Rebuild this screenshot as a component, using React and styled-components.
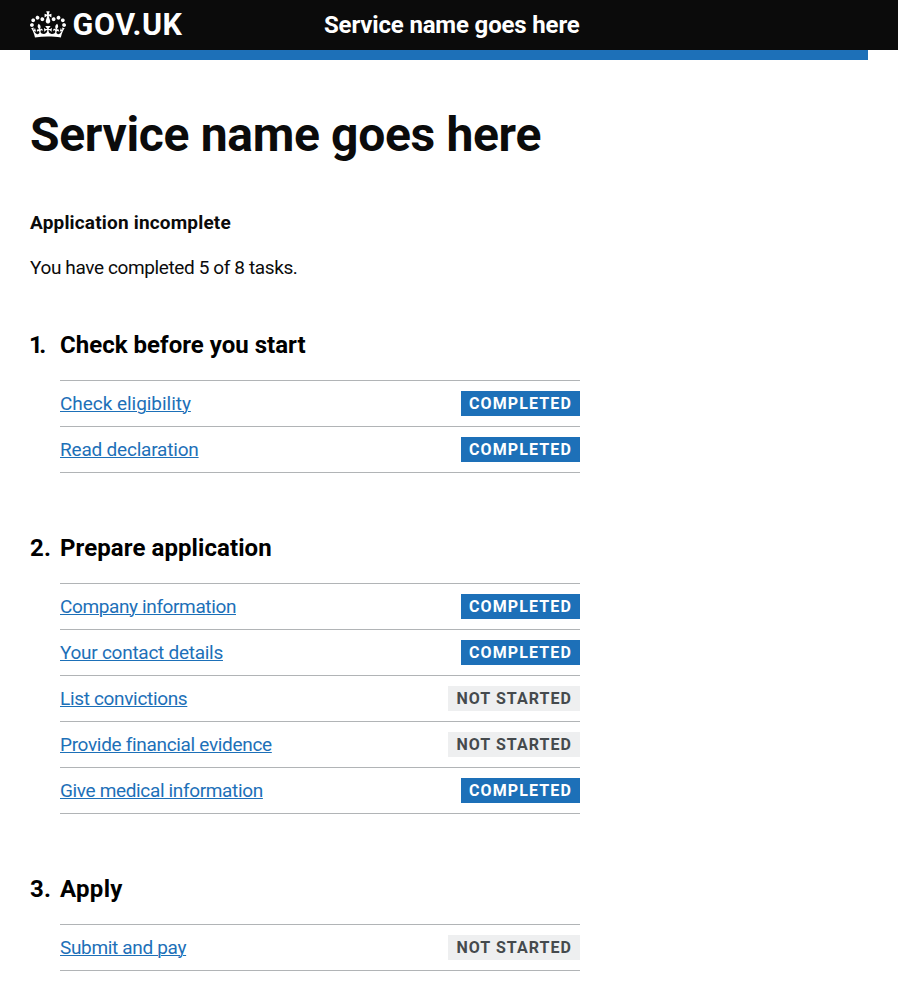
import React from 'react';
import styled, { createGlobalStyle } from 'styled-components';

const GlobalStyle = createGlobalStyle`
  *, *::before, *::after { box-sizing: border-box; }
  body {
    margin: 0;
    background: #fff;
    color: #0b0b0b;
    font-family: Roboto, "Liberation Sans", sans-serif;
    -webkit-font-smoothing: antialiased;
  }
`;

const Header = styled.header`
  height: 60px;
  padding: 0 30px;
  background: linear-gradient(#0b0b0b 50px, #fff 50px);
`;

const HeaderContainer = styled.div`
  display: grid;
  grid-template-columns: 294px 1fr;
  height: 60px;
  padding-top: 10px;
  border-bottom: 10px solid #1d70b8;
`;

const LogoLink = styled.a`
  display: flex;
  align-items: flex-start;
  gap: 6.5px;
  color: #fff;
  text-decoration: none;
`;

const Crown = styled.svg`
  flex: none;
  width: 36px;
  height: 27px;
  margin-top: 0.5px;
  fill: currentColor;
`;

const LogoText = styled.span`
  font-size: 30.5px;
  line-height: 30px;
  font-weight: 700;
  letter-spacing: 0.6px;
`;

const ServiceLink = styled.a`
  color: #fff;
  font-size: 24px;
  line-height: 30px;
  font-weight: 700;
  letter-spacing: -0.16px;
  text-decoration: none;
`;

const Main = styled.main`
  width: 610px;
  padding: 50px 30px 0;
`;

const PageTitle = styled.h1`
  margin: 0 0 50px;
  font-size: 48px;
  line-height: 50px;
  font-weight: 700;
  letter-spacing: -0.33px;
`;

const StatusTitle = styled.h2`
  margin: 0 0 20px;
  font-size: 19px;
  line-height: 25px;
  font-weight: 700;
  letter-spacing: 0.18px;
`;

const Summary = styled.p`
  margin: 0 0 50px;
  font-size: 19px;
  line-height: 25px;
  letter-spacing: -0.38px;
`;

const Sections = styled.ol`
  display: flex;
  flex-direction: column;
  gap: 60px;
  margin: 0;
  padding: 0;
  list-style: none;
`;

const SectionTitle = styled.h2`
  display: grid;
  grid-template-columns: 30px 1fr;
  margin: 0 0 20px;
  color: #000;
  font-size: 24px;
  line-height: 30px;
  font-weight: 700;
  letter-spacing: ${({ $tracking }) => $tracking}px;
`;

const SectionNumber = styled.span`
  margin-left: ${({ $narrow }) => ($narrow ? -1 : 0)}px;
  letter-spacing: ${({ $narrow }) => ($narrow ? -3.5 : 0.3)}px;
`;

const TaskList = styled.ul`
  margin: 0 0 0 30px;
  padding: 0;
  border-top: 1px solid #b1b4b6;
  list-style: none;
`;

const Task = styled.li`
  display: flex;
  justify-content: space-between;
  padding: 10px 0;
  border-bottom: 1px solid #b1b4b6;
`;

const TaskLink = styled.a`
  color: #1d70b8;
  font-size: 19px;
  line-height: 25px;
  letter-spacing: ${({ $tracking }) => $tracking}px;
  text-decoration: underline;
  text-decoration-thickness: 1px;
  text-underline-offset: 1px;
`;

const Tag = styled.strong`
  height: 25px;
  padding: 0 8px;
  background: ${({ $done }) => ($done ? '#1d70b8' : '#eeeff0')};
  color: ${({ $done }) => ($done ? '#fff' : '#454a4d')};
  font-size: 16px;
  line-height: 25px;
  font-weight: 700;
  letter-spacing: ${({ $done }) => ($done ? 1.12 : 1.045)}px;
  text-transform: uppercase;
  white-space: nowrap;
`;

const sections = [
  {
    title: 'Check before you start',
    tracking: 0.02,
    tasks: [
      { name: 'Check eligibility', done: true, tracking: -0.04 },
      { name: 'Read declaration', done: true, tracking: -0.2 },
    ],
  },
  {
    title: 'Prepare application',
    tracking: 0.08,
    tasks: [
      { name: 'Company information', done: true, tracking: -0.38 },
      { name: 'Your contact details', done: true, tracking: -0.27 },
      { name: 'List convictions', done: false, tracking: -0.33 },
      { name: 'Provide financial evidence', done: false, tracking: -0.32 },
      { name: 'Give medical information', done: true, tracking: -0.35 },
    ],
  },
  {
    title: 'Apply',
    tracking: 0.3,
    tasks: [{ name: 'Submit and pay', done: false, tracking: -0.33 }],
  },
];

function CrownIcon() {
  return (
    <Crown viewBox="0 0 132 97" aria-hidden="true">
      <path
        fillRule="evenodd"
        d="M25 30.2c3.5 1.5 7.7-.2 9.1-3.7 1.5-3.6-.2-7.8-3.9-9.2-3.6-1.4-7.6.3-9.1 3.9-1.4 3.5.3 7.5 3.9 9zM9 39.5c3.6 1.5 7.8-.2 9.2-3.7 1.5-3.6-.2-7.8-3.9-9.1-3.6-1.5-7.6.2-9.1 3.8-1.4 3.5.3 7.5 3.8 9zM4.4 57.2c3.5 1.5 7.7-.2 9.1-3.8 1.5-3.6-.2-7.7-3.9-9.1-3.5-1.5-7.6.3-9.1 3.8-1.4 3.5.3 7.6 3.9 9.1zm38.3-21.4c3.5 1.5 7.7-.2 9.1-3.8 1.5-3.6-.2-7.7-3.9-9.1-3.6-1.5-7.6.3-9.1 3.8-1.3 3.6.4 7.7 3.9 9.1zm64.4-5.6c-3.6 1.5-7.8-.2-9.1-3.7-1.5-3.6.2-7.8 3.8-9.2 3.6-1.4 7.7.3 9.2 3.9 1.3 3.5-.4 7.5-3.9 9zm15.9 9.3c-3.6 1.5-7.7-.2-9.1-3.7-1.5-3.6.2-7.8 3.7-9.1 3.6-1.5 7.7.2 9.2 3.8 1.5 3.5-.3 7.5-3.8 9zm4.7 17.7c-3.6 1.5-7.8-.2-9.2-3.8-1.5-3.6.2-7.7 3.9-9.1 3.6-1.5 7.7.3 9.2 3.8 1.3 3.5-.4 7.6-3.9 9.1zM89.3 35.8c-3.6 1.5-7.8-.2-9.2-3.8-1.4-3.6.2-7.7 3.9-9.1 3.6-1.5 7.7.3 9.2 3.8 1.4 3.6-.3 7.7-3.9 9.1zM69.7 17.7l8.9 4.7V9.3l-8.9 2.8c-.2-.3-.5-.6-.9-.9L72.4 0H59.6l3.5 11.2c-.3.3-.6.5-.9.9l-8.8-2.8v13.1l8.8-4.7c.3.3.6.7.9.9l-5 15.4v.1c-.2.8-.4 1.6-.4 2.4 0 4.1 3.1 7.5 7 8.1h.2c.3 0 .7.1 1 .1.4 0 .7 0 1-.1h.2c4-.6 7.1-4.1 7.1-8.1 0-.8-.1-1.7-.4-2.4V34l-5.1-15.4c.4-.2.7-.6 1-.9zM66 92.8c16.9 0 32.8 1.1 47.1 3.2 4-16.9 8.9-26.7 14-33.5l-9.6-3.4c1 4.9 1.1 7.2 0 10.2-1.5-1.4-3-4.3-4.2-8.7L108.6 76c2.8-2 5-3.2 7.5-3.3-4.4 9.4-10 11.9-13.6 11.2-4.3-.8-6.3-4.6-5.6-7.9 1-4.7 5.7-5.9 8-.5 4.3-8.7-3-11.4-7.6-8.8 7.1-7.2 7.9-13.5 2.1-21.1-8 6.1-8.1 12.3-4.5 20.8-4.7-5.4-12.1-2.5-9.5 6.2 3.4-5.2 7.9-2 7.2 3.1-.6 4.3-6.4 7.8-13.5 7.2-10.3-.9-10.9-8-11.2-13.8 2.5-.5 7.1 1.8 11 7.3L80.2 60c-4.1 4.4-8 5.3-12.3 5.4 1.4-4.4 8-11.6 8-11.6H55.5s6.4 7.2 7.9 11.6c-4.2-.1-8-1-12.3-5.4l1.4 16.4c3.9-5.5 8.5-7.7 10.9-7.3-.3 5.8-.9 12.8-11.1 13.8-7.2.6-12.9-2.9-13.5-7.2-.7-5 3.8-8.3 7.1-3.1 2.7-8.7-4.6-11.6-9.4-6.2 3.7-8.5 3.6-14.7-4.6-20.8-5.8 7.6-5 13.9 2.2 21.1-4.7-2.6-11.9.1-7.7 8.8 2.3-5.5 7.1-4.2 8.1.5.7 3.3-1.3 7.1-5.7 7.9-3.5.7-9-1.8-13.5-11.2 2.5.1 4.7 1.3 7.5 3.3l-4.7-15.4c-1.2 4.4-2.7 7.2-4.3 8.7-1.1-3-.9-5.3 0-10.2l-9.5 3.4c5 6.9 9.9 16.7 14 33.5 14.8-2.1 30.8-3.2 47.7-3.2z"
      />
    </Crown>
  );
}

export default function App() {
  return (
    <>
      <GlobalStyle />
      <Header>
        <HeaderContainer>
          <LogoLink href="#">
            <CrownIcon />
            <LogoText>GOV.UK</LogoText>
          </LogoLink>
          <ServiceLink href="#">Service name goes here</ServiceLink>
        </HeaderContainer>
      </Header>
      <Main>
        <PageTitle>Service name goes here</PageTitle>
        <StatusTitle>Application incomplete</StatusTitle>
        <Summary>You have completed 5 of 8 tasks.</Summary>
        <Sections>
          {sections.map((section, index) => (
            <li key={section.title}>
              <SectionTitle $tracking={section.tracking}>
                <SectionNumber $narrow={index === 0}>{index + 1}.</SectionNumber>
                <span>{section.title}</span>
              </SectionTitle>
              <TaskList>
                {section.tasks.map((task) => (
                  <Task key={task.name}>
                    <TaskLink href="#" $tracking={task.tracking}>
                      {task.name}
                    </TaskLink>
                    <Tag $done={task.done}>{task.done ? 'Completed' : 'Not started'}</Tag>
                  </Task>
                ))}
              </TaskList>
            </li>
          ))}
        </Sections>
      </Main>
    </>
  );
}
